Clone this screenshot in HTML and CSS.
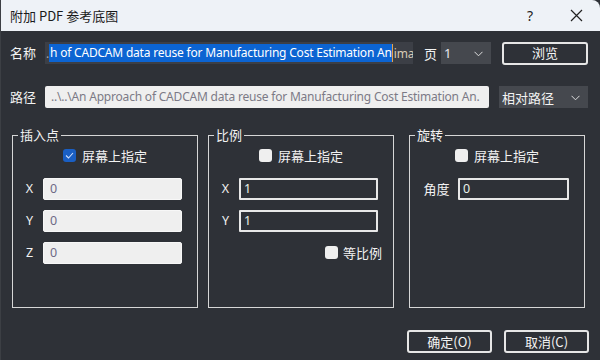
FILE: index.html
```html
<!DOCTYPE html>
<html lang="zh">
<head>
<meta charset="utf-8">
<title>附加 PDF 参考底图</title>
<link rel="stylesheet" href="styles.css">
</head>
<body>
<div class="dialog">
  <div class="titlebar">
    <span class="title">附加 PDF 参考底图</span>
    <span class="help">?</span>
    <span class="close"><svg width="13" height="13" viewBox="0 0 13 13"><path d="M1 1 L12 12 M12 1 L1 12" stroke="#222" stroke-width="1.2" fill="none"/></svg></span>
  </div>
  <div class="content">
    <div class="row row1">
      <span class="lbl">名称</span>
      <div class="field name-field"><span class="dot">.</span><span class="sel">h of CADCAM data reuse for Manufacturing Cost Estimation An</span><span class="caret"></span><span class="rest">ima</span></div>
      <span class="page-lbl">页</span>
      <div class="combo page-combo"><span>1</span><svg class="chev" width="9" height="6" viewBox="0 0 9 6"><path d="M0.5 0.8 L4.5 4.8 L8.5 0.8" stroke="#ddd" stroke-width="1" fill="none"/></svg></div>
      <button class="btn browse">浏览</button>
    </div>
    <div class="row row2">
      <span class="lbl">路径</span>
      <div class="field path-field">..\..\An Approach of CADCAM data reuse for Manufacturing Cost Estimation An.</div>
      <div class="combo path-combo"><span>相对路径</span><svg class="chev" width="9" height="6" viewBox="0 0 9 6"><path d="M0.5 0.8 L4.5 4.8 L8.5 0.8" stroke="#ddd" stroke-width="1" fill="none"/></svg></div>
    </div>
    <div class="groups">
      <fieldset class="grp g1">
        <legend>插入点</legend>
        <label class="chk-row"><span class="cb checked"><svg width="9" height="7" viewBox="0 0 9 7"><path d="M1 3.5 L3.5 6 L8 1" stroke="#cfe0ff" stroke-width="1.1" fill="none"/></svg></span>屏幕上指定</label>
        <div class="frow"><span class="flbl">X</span><div class="inp light">0</div></div>
        <div class="frow"><span class="flbl">Y</span><div class="inp light">0</div></div>
        <div class="frow"><span class="flbl">Z</span><div class="inp light">0</div></div>
      </fieldset>
      <fieldset class="grp g2">
        <legend>比例</legend>
        <label class="chk-row"><span class="cb"></span>屏幕上指定</label>
        <div class="frow"><span class="flbl">X</span><div class="inp dark">1</div></div>
        <div class="frow"><span class="flbl">Y</span><div class="inp dark">1</div></div>
        <label class="chk-row uniform"><span class="cb"></span>等比例</label>
      </fieldset>
      <fieldset class="grp g3">
        <legend>旋转</legend>
        <label class="chk-row"><span class="cb"></span>屏幕上指定</label>
        <div class="frow"><span class="flbl wide">角度</span><div class="inp dark">0</div></div>
      </fieldset>
    </div>
    <div class="actions">
      <button class="btn act">确定(O)</button>
      <button class="btn act">取消(C)</button>
    </div>
  </div>
</div>
</body>
</html>
```
FILE: styles.css
```css
* { box-sizing: border-box; }
html, body {
  margin: 0;
  padding: 0;
  background: #2e3137;
  width: 600px;
  height: 360px;
  overflow: hidden;
}
body {
  font-family: "Noto Sans CJK SC", "Noto Sans", sans-serif;
  font-size: 13px;
  color: #f2f2f2;
}
.dialog {
  width: 600px;
  height: 360px;
  background: #2e3137;
  border-left: 1px solid #3c3f44;
}
.titlebar {
  height: 31px;
  background: #eef2f7;
  border-top-right-radius: 8px;
  display: flex;
  align-items: center;
  padding-left: 9px;
  color: #1b1b1b;
}
.title { flex: 1; font-size: 13px; }
.help {
  font-family: "Noto Sans", sans-serif;
  font-size: 14px;
  width: 12px;
  margin-right: 31px;
  color: #222;
}
.close { width: 13px; height: 13px; margin-right: 17px; display: flex; }
.content { padding-top: 11px; }
.row { display: flex; align-items: center; height: 22px; padding-left: 9px; }
.row2 { margin-top: 22px; }
.lbl { width: 35px; line-height: 22px; }
.field {
  height: 22px;
  line-height: 21px;
  font-family: "Noto Sans", sans-serif;
  font-size: 12px;
  letter-spacing: -0.2px;
  white-space: nowrap;
  overflow: hidden;
}
.name-field {
  width: 368px;
  flex: none;
  background: #3c3f46;
  color: #d9cbb5;
  padding-left: 1px;
  display: flex;
  align-items: center;
}
.dot { width: 3px; overflow: hidden; color: #aaa; flex: none; }
.sel {
  background: #0c64d2;
  color: #fff;
  height: 18px;
  line-height: 18px;
  padding-left: 1px;
  flex: none;
}
.caret { width: 1px; height: 18px; background: #e6a24a; flex: none; }
.rest { margin-left: 1px; flex: none; }
.page-lbl { margin-left: 11px; width: 17px; }
.combo {
  height: 22px;
  background: #45484e;
  display: flex;
  align-items: center;
  justify-content: space-between;
  padding: 0 8px 0 3px;
  flex: none;
}
.page-combo { width: 50px; font-family: "Noto Sans", sans-serif; color: #e8e8ee; }
.path-combo { width: 89px; margin-left: 10px; font-size: 13px; }
.chev { margin-top: 1px; }
.btn {
  font-family: "Noto Sans CJK SC", "Noto Sans", sans-serif;
  font-size: 13px;
  color: #f4f4f4;
  background: #2e3137;
  border: 2px solid #e6e6e6;
  border-radius: 3px;
  height: 23px;
  padding: 0;
  line-height: 18px;
  flex: none;
}
.browse { width: 86px; margin-left: 11px; }
.path-field {
  width: 444px;
  flex: none;
  background: #efefef;
  color: #7c7a86;
  padding-left: 6px;
  border-radius: 2px;
}
.groups {
  display: flex;
  padding-left: 11px;
  margin-top: 18px;
}
.grp {
  margin: 0;
  padding: 0;
  border: 1px solid #d6d6d6;
  height: 182px;
  min-width: 0;
}
.g1 { width: 186px; }
.g2 { width: 186px; margin-left: 10px; }
.g3 { width: 176px; margin-left: 15px; }
legend {
  margin-left: 5px;
  padding: 0 2px;
  line-height: 18px;
  font-size: 13px;
}
.chk-row {
  display: flex;
  justify-content: center;
  align-items: center;
  height: 18px;
  margin-top: 2px;
  gap: 6px;
}
.cb {
  width: 13px;
  height: 13px;
  border-radius: 3px;
  background: #efefef;
  display: flex;
  align-items: center;
  justify-content: center;
}
.cb.checked { background: #1a5fc4; }
.frow {
  display: flex;
  align-items: center;
  margin-top: 12px;
  padding-right: 15px;
}
.frow + .frow { margin-top: 10px; }
.chk-row + .frow { margin-top: 14px; }
.flbl {
  width: 30px;
  padding-left: 3px;
  text-align: center;
  font-family: "Noto Sans", sans-serif;
  font-size: 12.5px;
  line-height: 22px;
}
.flbl.wide {
  width: 48px;
  padding-left: 5px;
  font-family: "Noto Sans CJK SC", sans-serif;
  font-size: 13px;
}
.inp {
  flex: 1;
  height: 22px;
  line-height: 20px;
  padding-left: 6px;
  font-family: "Noto Sans", sans-serif;
  font-size: 12.5px;
}
.inp.light {
  background: #efefef;
  border: 1px solid #f7f7f7;
  border-radius: 2px;
  color: #6e6a86;
}
.inp.dark {
  background: #2e3137;
  border: 2px solid #e8e8e8;
  border-radius: 1px;
  color: #e8f2ea;
  line-height: 18px;
  padding-left: 3px;
}
.uniform {
  justify-content: flex-end;
  padding-right: 11px;
  margin-top: 11px;
  gap: 5px;
}
.actions {
  display: flex;
  justify-content: flex-end;
  gap: 12px;
  padding-right: 11px;
  margin-top: 22px;
}
.act { width: 85px; }
```
